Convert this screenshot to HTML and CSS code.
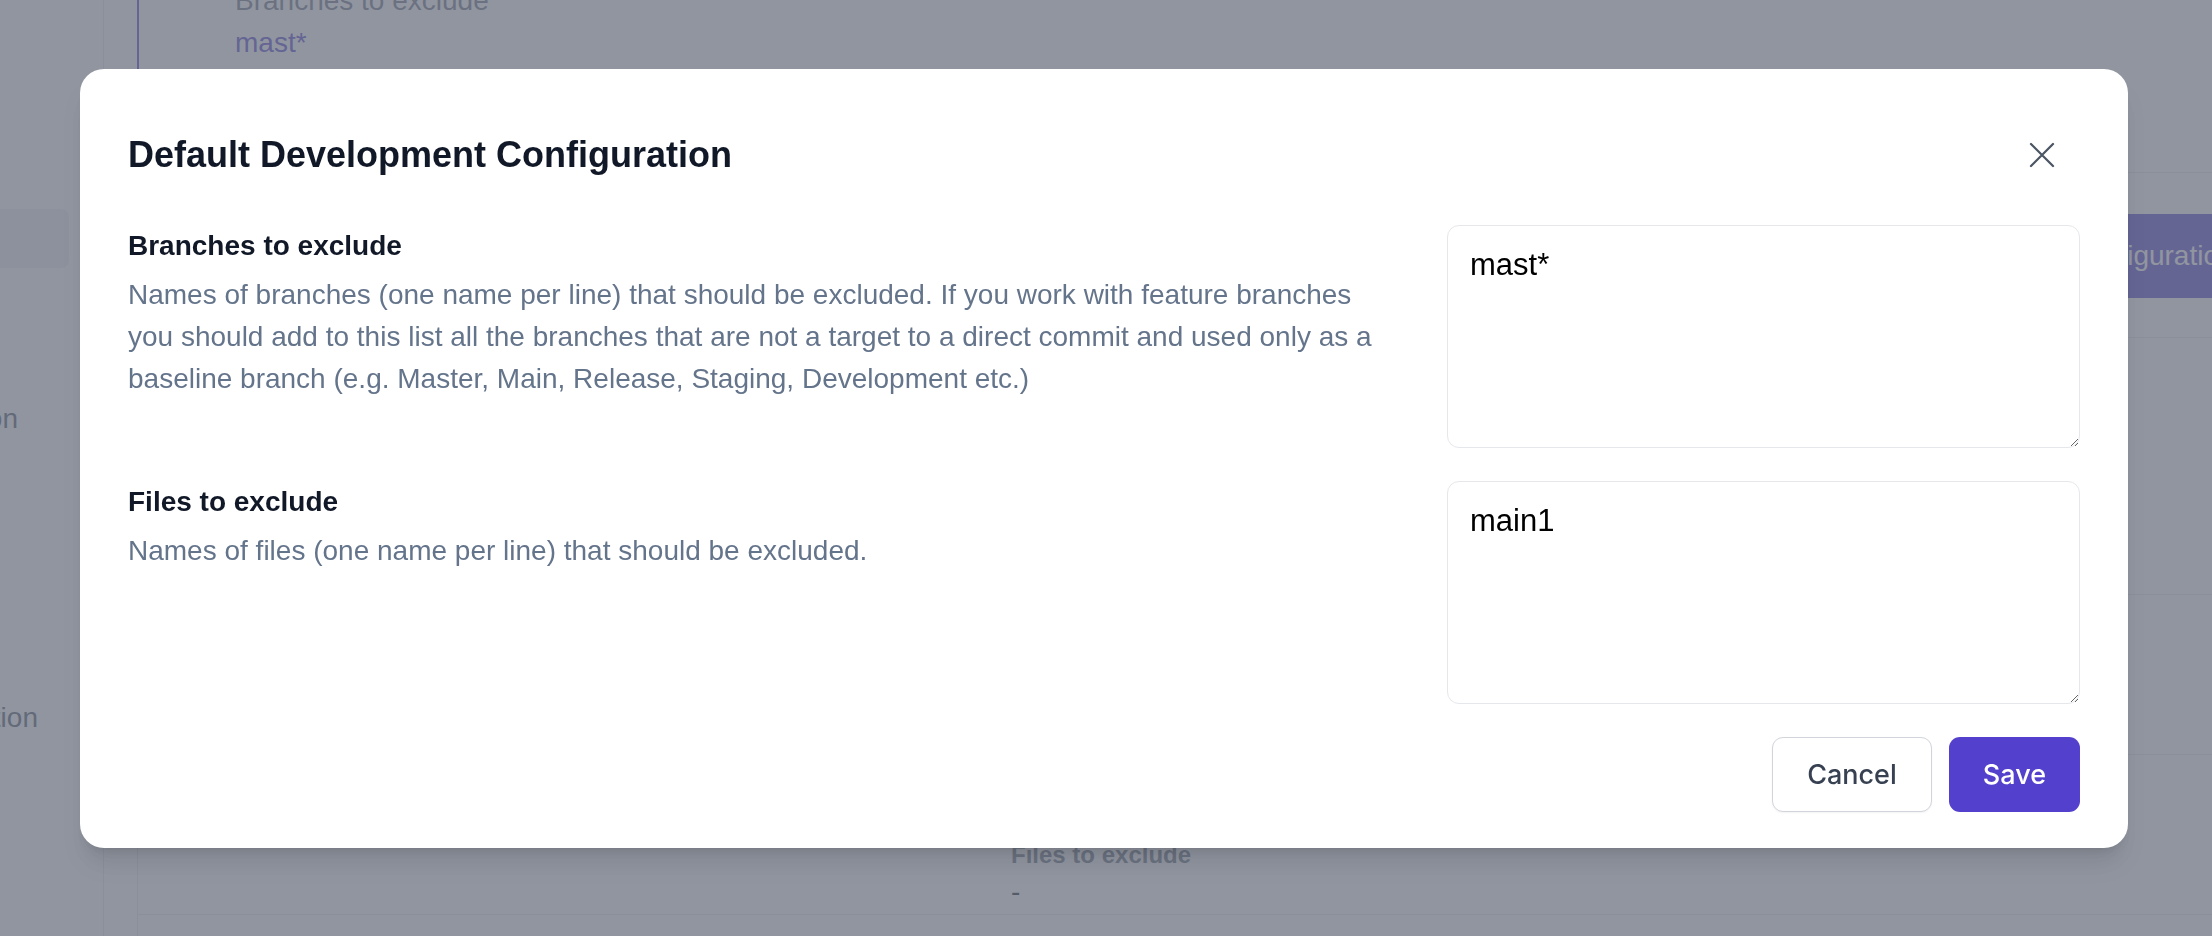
FILE: index.html
```html
<!DOCTYPE html>
<html lang="en">
<head>
<meta charset="UTF-8">
<meta name="viewport" content="width=device-width, initial-scale=1.0">
<title>Default Development Configuration</title>
<link rel="stylesheet" href="styles.css">
</head>
<body>

<div class="page">
  <aside class="sidebar">
    <div class="nav-item active"></div>
    <div class="nav-item nav-first"><span>Integration</span></div>
    <div class="nav-item nav-second"><span>Configuration</span></div>
  </aside>

  <main class="content">
    <section class="row row-top">
      <div class="top-label">Branches to exclude</div>
      <div class="field-value accent">mast*</div>
    </section>
    <section class="row row-actions">
      <button class="edit-btn">Edit Configuration</button>
    </section>
    <section class="row row-tall"></section>
    <section class="row row-mid"></section>
    <section class="row row-files">
      <div class="field-label">Files to exclude</div>
      <div class="field-value">-</div>
    </section>
  </main>
</div>

<div class="overlay">
  <div class="modal">
    <div class="modal-header">
      <h2 class="modal-title">Default Development Configuration</h2>
      <button class="close-btn" aria-label="Close">
        <svg viewBox="0 0 24 24" width="44" height="44" fill="none" stroke="#4b5563" stroke-width="1.25" stroke-linecap="round">
          <path d="M6 6L18 18M18 6L6 18"/>
        </svg>
      </button>
    </div>

    <div class="setting">
      <div class="setting-text">
        <div class="setting-title">Branches to exclude</div>
        <p class="setting-desc">Names of branches (one name per line) that should be excluded. If you work with feature branches you should add to this list all the branches that are not a target to a direct commit and used only as a baseline branch (e.g. Master, Main, Release, Staging, Development etc.)</p>
      </div>
      <textarea id="branches">mast*</textarea>
    </div>

    <div class="setting">
      <div class="setting-text">
        <div class="setting-title">Files to exclude</div>
        <p class="setting-desc">Names of files (one name per line) that should be excluded.</p>
      </div>
      <textarea id="files">main1</textarea>
    </div>

    <div class="modal-footer">
      <button class="btn btn-cancel">Cancel</button>
      <button class="btn btn-save">Save</button>
    </div>
  </div>
</div>

</body>
</html>
```

FILE: styles.css
```css
body {
  font-family: "Liberation Sans", Arial, sans-serif;
  margin: 0;
  padding: 0;
  overflow: hidden;
  background-color: #fff;
}

.page {
  display: flex;
  height: 936px;
}

/* background page, sits under the overlay */
.sidebar {
  width: 103px;
  flex-shrink: 0;
  border-right: 1px solid #e5e7eb;
}

.nav-item {
  width: 18px;
  height: 42px;
  display: flex;
  justify-content: flex-end;
  font-size: 28px;
  line-height: 42px;
  color: #4b5563;
  white-space: nowrap;
}

.nav-item.active {
  width: 69px;
  height: 59px;
  margin-top: 209px;
  background-color: #eff0f3;
  border-radius: 0 8px 8px 0;
}

.nav-first {
  margin-top: 130px;
}

.nav-second {
  width: 38px;
  margin-top: 257px;
}

.content {
  flex: 1;
  margin-left: 33px;
  border-left: 1px solid #e5e7eb;
}

.row {
  display: flow-root;
  border-bottom: 1px solid #e5e7eb;
  box-sizing: border-box;
}

.row-top {
  height: 173px;
  padding-left: 96px;
  border-left: 2px solid #5340cc;
  margin-left: -1px;
}

.top-label {
  margin-top: -20px;
  font-size: 28px;
  line-height: 42px;
  color: #6b7280;
}

.row-actions {
  height: 165px;
  padding: 41px 0 0 1846px;
  white-space: nowrap;
}

.row-tall {
  height: 257px;
}

.row-mid {
  height: 160px;
}

.row-files {
  height: 160px;
  padding: 84px 0 0 873px;
}

.field-label {
  font-size: 24px;
  line-height: 32px;
  font-weight: 700;
  color: #6b7280;
}

.field-value {
  font-size: 28px;
  line-height: 42px;
  color: #111827;
}

.field-value.accent {
  color: #5340cc;
}

.edit-btn {
  height: 84px;
  padding: 0 28px;
  font-family: "Liberation Sans", Arial, sans-serif;
  font-size: 28px;
  color: #fff;
  background-color: #5340cc;
  border: none;
  border-radius: 10px;
}

/* modal */
.overlay {
  position: fixed;
  inset: 0;
  background-color: rgba(107, 114, 128, 0.75);
}

.modal {
  width: 2048px;
  margin: 69px 0 0 80px;
  padding: 48px 48px 36px;
  box-sizing: border-box;
  background-color: #fff;
  border-radius: 24px;
  box-shadow: 0 20px 25px -5px rgba(0, 0, 0, 0.1), 0 8px 10px -6px rgba(0, 0, 0, 0.1);
  display: flex;
  flex-direction: column;
  gap: 33px;
}

.modal-header {
  height: 75px;
  display: flex;
  align-items: center;
  justify-content: space-between;
}

.modal-title {
  margin: 0;
  font-size: 36px;
  line-height: 54px;
  font-weight: 700;
  color: #111827;
}

.close-btn {
  width: 44px;
  height: 44px;
  margin-right: 16px;
  padding: 0;
  border: none;
  background: none;
  cursor: pointer;
}

.close-btn svg {
  display: block;
}

.setting {
  display: grid;
  grid-template-columns: 1fr 633px;
  column-gap: 58px;
}

.setting-title {
  font-size: 28px;
  line-height: 42px;
  font-weight: 700;
  color: #111827;
}

.setting-desc {
  margin: 7px 0 0;
  font-size: 28px;
  line-height: 42px;
  color: #64748b;
}

.setting textarea {
  height: 223px;
  box-sizing: border-box;
  padding: 16px 22px;
  font-family: "Liberation Sans", Arial, sans-serif;
  font-size: 31px;
  line-height: 1.5;
  color: #000;
  border: 1.5px solid #e5e7eb;
  border-radius: 12px;
  resize: vertical;
  outline: none;
}

.modal-footer {
  display: flex;
  justify-content: flex-end;
  gap: 17px;
}

.btn {
  height: 75px;
  padding: 0 34px;
  box-sizing: border-box;
  font-family: Inter, "Liberation Sans", sans-serif;
  font-size: 27px;
  font-weight: 500;
  border-radius: 11px;
  cursor: pointer;
}

.btn-cancel {
  color: #374151;
  background-color: #fff;
  border: 1.5px solid #d1d5db;
  box-shadow: 0 1px 2px rgba(0, 0, 0, 0.05);
}

.btn-save {
  color: #fff;
  background-color: #5340cc;
  border: none;
}
```
